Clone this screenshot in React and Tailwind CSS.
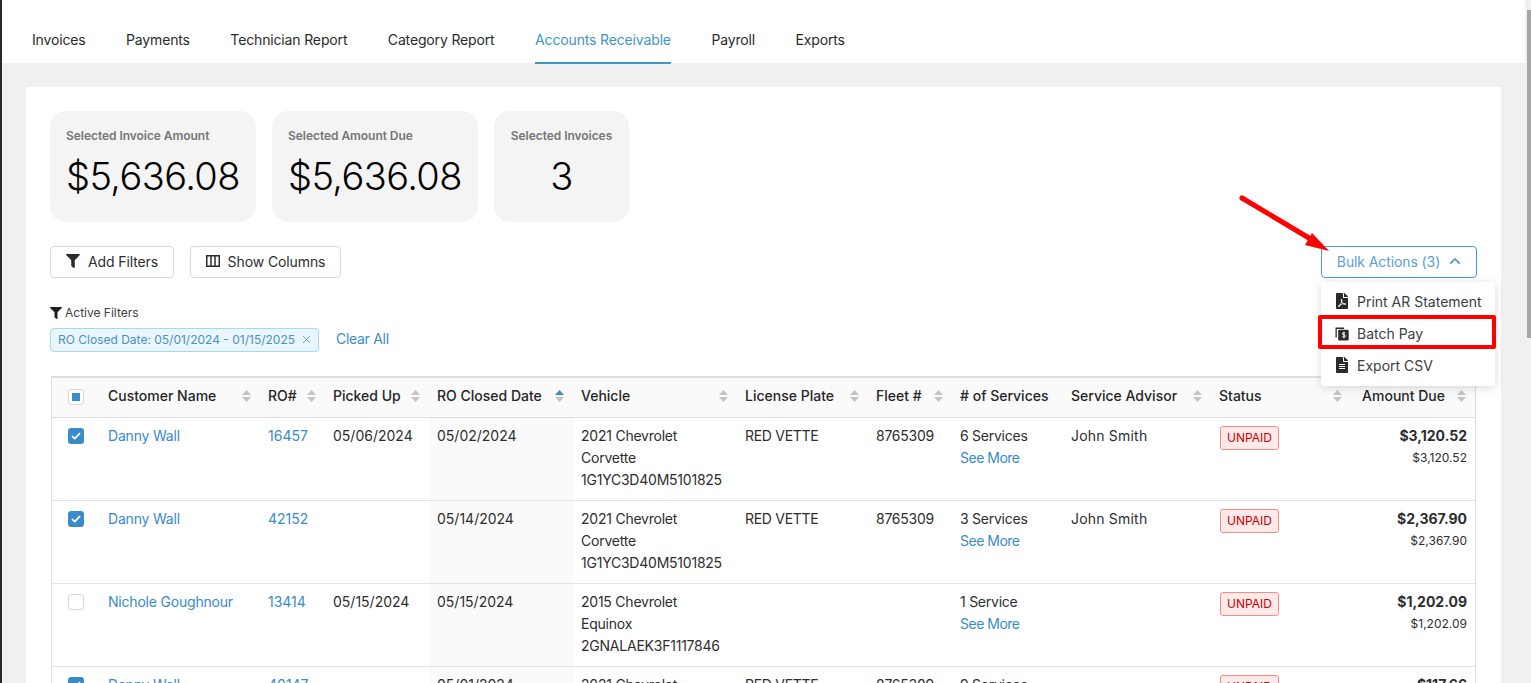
import React from 'react';
import { FaFilter, FaFilePdf, FaFileAlt, FaChevronUp } from 'react-icons/fa';
import { X } from 'lucide-react';

const tabs = ['Invoices', 'Payments', 'Technician Report', 'Category Report', 'Accounts Receivable', 'Payroll', 'Exports'];

const columns = [
  { label: 'Customer Name', sort: true },
  { label: 'RO#', sort: true },
  { label: 'Picked Up', sort: true },
  { label: 'RO Closed Date', sort: true, active: true },
  { label: 'Vehicle', sort: true },
  { label: 'License Plate', sort: true },
  { label: 'Fleet #', sort: true },
  { label: '# of Services', sort: false },
  { label: 'Service Advisor', sort: true },
  { label: 'Status', sort: true },
  { label: 'Amount Due', sort: true, right: true },
];

const rows = [
  { checked: true, name: 'Danny Wall', ro: '16457', picked: '05/06/2024', closed: '05/02/2024', vehicle: ['2021 Chevrolet', 'Corvette', '1G1YC3D40M5101825'], plate: 'RED VETTE', fleet: '8765309', services: '6 Services', advisor: 'John Smith', amount: '$3,120.52' },
  { checked: true, name: 'Danny Wall', ro: '42152', picked: '', closed: '05/14/2024', vehicle: ['2021 Chevrolet', 'Corvette', '1G1YC3D40M5101825'], plate: 'RED VETTE', fleet: '8765309', services: '3 Services', advisor: 'John Smith', amount: '$2,367.90' },
  { checked: false, name: 'Nichole Goughnour', ro: '13414', picked: '05/15/2024', closed: '05/15/2024', vehicle: ['2015 Chevrolet', 'Equinox', '2GNALAEK3F1117846'], plate: '', fleet: '', services: '1 Service', advisor: '', amount: '$1,202.09' },
  { checked: true, name: 'Danny Wall', ro: '40147', picked: '', closed: '05/01/2024', vehicle: ['2021 Chevrolet', 'Corvette', '1G1YC3D40M5101825'], plate: 'RED VETTE', fleet: '8765309', services: '9 Services', advisor: '', amount: '$117.66' },
];

function SortIcon({ active }) {
  return (
    <svg width="9" height="12" viewBox="0 0 9 12" className="shrink-0">
      <path d="M4.5 0 L9 5 L0 5 Z" fill={active ? '#3a8bc9' : '#c4c4c4'} />
      <path d="M0 7 L9 7 L4.5 12 Z" fill="#c4c4c4" />
    </svg>
  );
}

function Checkbox({ checked }) {
  if (!checked) {
    return <div className="w-4 h-4 rounded-[3px] border border-[#d9d9d9] bg-white" />;
  }
  return (
    <div className="w-4 h-4 rounded-[3px] bg-[#3a8bc9] flex items-center justify-center">
      <svg width="10" height="8" viewBox="0 0 10 8" fill="none">
        <path d="M1 4 L3.8 6.6 L9 1.2" stroke="white" strokeWidth="1.8" />
      </svg>
    </div>
  );
}

function StatCard({ label, value, center }) {
  return (
    <div className={`h-[111px] rounded-2xl bg-[#f4f4f4] px-4 pt-[16px] ${center ? 'text-center' : ''}`}>
      <div className="text-[12px] leading-[18px] font-semibold text-[#767676] tracking-[-0.05px] whitespace-nowrap">{label}</div>
      <div className="mt-[6px] text-[38px] leading-[50px] font-light text-black tracking-[-0.6px]">{value}</div>
    </div>
  );
}

function BatchPayIcon() {
  return (
    <svg width="15" height="15" viewBox="0 0 14 14">
      <path d="M0.5 1 H9 V2.4 H1.8 V11 H0.5 Z" fill="#2b2b2b" />
      <rect x="3.2" y="3.2" width="10.5" height="10.8" rx="1.2" fill="#2b2b2b" />
      <path d="M10.2 6.6 C9.6 5.9 7.4 5.9 7.4 7.2 C7.4 8.6 10.4 8 10.4 9.6 C10.4 10.9 8.2 10.9 7.4 10.1 M8.9 5.2 V11.8" fill="none" stroke="white" strokeWidth="1" />
    </svg>
  );
}

function MenuItem({ icon, label }) {
  return (
    <div className="h-8 pl-[14px] pb-[2px] flex items-center gap-[8px] text-[14px] text-[#3d3d3d] whitespace-nowrap">
      <span className="w-[14px] flex justify-center text-[#2b2b2b]">{icon}</span>
      {label}
    </div>
  );
}

const cell = 'border-b border-[#e3e3e3] px-2 pt-[7px] pb-2';

export default function App() {
  return (
    <div className="relative flex h-[683px] w-[1531px] overflow-hidden bg-[#f0f0f0] text-[#2e2e2e] font-['Inter','Liberation_Sans',sans-serif]">
      <div className="w-[2px] shrink-0 bg-[#1f2a33]" />

      <div className="flex-1 min-w-0">
        <nav className="h-[63px] pl-[30px] flex items-end gap-[40.5px] bg-white">
          {tabs.map((t) => (
            <div
              key={t}
              className={`h-[49px] -mb-px pt-[16px] text-[14px] leading-[18px] tracking-[-0.15px] whitespace-nowrap ${t === 'Accounts Receivable' ? 'text-[#4096c4] border-b-2 border-[#4096c4]' : 'text-[#2b2b2b]'}`}
            >
              {t}
            </div>
          ))}
        </nav>

        <main className="ml-[24px] mr-[24px] mt-[24px] bg-white p-6 h-[700px]">
          <div className="flex gap-4">
            <div className="w-[206px]"><StatCard label="Selected Invoice Amount" value="$5,636.08" /></div>
            <div className="w-[206px]"><StatCard label="Selected Amount Due" value="$5,636.08" /></div>
            <div className="w-[135px]"><StatCard label="Selected Invoices" value="3" center /></div>
          </div>

          <div className="mt-6 flex items-start justify-between">
            <div className="flex gap-4">
              <button className="h-8 w-[124px] pb-[2px] rounded-[4px] border border-[#d9d9d9] bg-white flex items-center justify-center gap-2 text-[14px] tracking-[-0.1px]">
                <FaFilter size={14} className="text-[#2b2b2b]" /> Add Filters
              </button>
              <button className="h-8 w-[151px] pb-[2px] rounded-[4px] border border-[#d9d9d9] bg-white flex items-center justify-center gap-2 text-[14px] tracking-[-0.1px]">
                <svg width="14" height="12" viewBox="0 0 14 12" fill="none" stroke="#2b2b2b">
                  <rect x="0.75" y="0.75" width="12.5" height="10.5" strokeWidth="1.5" />
                  <path d="M5 1 V11 M9 1 V11" strokeWidth="1.5" />
                </svg>
                Show Columns
              </button>
            </div>

            <div className="relative">
              <button className="h-8 w-[156px] pb-[2px] rounded-[4px] border border-[#4a9ad0] bg-white flex items-center justify-center gap-2 text-[14px] tracking-[-0.1px] text-[#5b9fd6]">
                Bulk Actions (3) <FaChevronUp size={12} className="ml-[1px]" />
              </button>
              <div className="absolute z-20 left-0 top-[36px] w-[174px] py-[4px] rounded-[4px] bg-white shadow-[0_2px_10px_rgba(0,0,0,0.15)]">
                <MenuItem icon={<FaFilePdf size={16} />} label="Print AR Statement" />
                <MenuItem icon={<BatchPayIcon />} label="Batch Pay" />
                <MenuItem icon={<FaFileAlt size={16} />} label="Export CSV" />
                <div className="absolute left-[-3px] top-[33px] w-[178px] h-[34px] border-[4px] border-[#ff0000] rounded-[2px]" />
              </div>
            </div>
          </div>

          <div className="mt-[27px] flex items-center gap-[3px] text-[12px] leading-[16px] text-[#3d3d3d]">
            <FaFilter size={12} className="text-[#1f1f1f]" /> Active Filters
          </div>
          <div className="mt-[7px] flex items-center gap-[17px]">
            <div className="h-6 w-[269px] pb-px rounded-[4px] border border-[#a6d8ee] bg-[#e9f7fd] pl-[7px] flex items-center gap-[5px] text-[12px] text-[#4a90c2] whitespace-nowrap">
              RO Closed Date: 05/01/2024 - 01/15/2025 <X size={13} strokeWidth={1.5} />
            </div>
            <div className="text-[14px] pb-[3px] tracking-[-0.3px] text-[#3a8bc9]">Clear All</div>
          </div>

          <div className="mt-[24px] mx-px border-t-2 border-l border-r border-[#dedede]">
            <table className="w-[1423px] table-fixed border-separate border-spacing-0 text-[14px] leading-[22px]">
              <colgroup>
                {[48, 160, 65, 104, 144, 164, 131, 84, 111, 148, 140, 124].map((w, i) => (
                  <col key={i} width={w} />
                ))}
              </colgroup>
              <thead>
                <tr className="h-[40px] bg-[#fafafa]">
                  <th className="border-b border-[#dedede] pl-4 pb-[2px] font-normal">
                    <div className="w-4 h-4 rounded-[3px] border border-[#d9d9d9] bg-white flex items-center justify-center">
                      <div className="w-2 h-2 bg-[#3a8bc9]" />
                    </div>
                  </th>
                  {columns.map((c) => (
                    <th key={c.label} className="border-b border-[#dedede] pl-2 pr-[9px] pb-[3px] font-medium text-[#262626] text-left">
                      <div className={`flex items-center whitespace-nowrap ${c.right ? 'justify-end gap-3' : 'justify-between'}`}>
                        {c.label}
                        {c.sort && <SortIcon active={c.active} />}
                      </div>
                    </th>
                  ))}
                </tr>
              </thead>
              <tbody>
                {rows.map((r, i) => (
                  <tr key={i} className="align-top">
                    <td className="h-[83px] border-b border-[#e3e3e3] pl-4 pt-[10px]"><Checkbox checked={r.checked} /></td>
                    <td className={`${cell} text-[#3a8bc9] whitespace-nowrap tracking-[-0.2px]`}>{r.name}</td>
                    <td className={`${cell} text-[#3a8bc9]`}>{r.ro}</td>
                    <td className={`${cell} whitespace-nowrap`}>{r.picked}</td>
                    <td className={`${cell} bg-[#fafafa]`}>{r.closed}</td>
                    <td className={`${cell} whitespace-nowrap tracking-[-0.23px]`}>
                      {r.vehicle.map((v) => <div key={v}>{v}</div>)}
                    </td>
                    <td className={`${cell} tracking-[-0.3px]`}>{r.plate}</td>
                    <td className={`${cell} tracking-[-0.25px]`}>{r.fleet}</td>
                    <td className={`${cell} tracking-[-0.25px]`}>
                      <div>{r.services}</div>
                      <div className="text-[#3a8bc9] tracking-[-0.5px]">See More</div>
                    </td>
                    <td className={`${cell} tracking-[0.2px]`}>{r.advisor}</td>
                    <td className="border-b border-[#e3e3e3] pl-[9px] pt-2">
                      <span className="inline-flex items-center justify-center w-[59px] h-6 rounded-[3px] border border-[#ff8a80] bg-[#ffeaea] text-[12px] text-[#cc0000]">UNPAID</span>
                    </td>
                    <td className={`${cell} text-right`}>
                      <div className="font-bold">{r.amount}</div>
                      <div className="text-[12px]">{r.amount}</div>
                    </td>
                  </tr>
                ))}
              </tbody>
            </table>
          </div>
        </main>
      </div>

      <div className="w-[6px] shrink-0">
        <div className="ml-[2px] mt-[10px] w-[4px] h-[328px] bg-[#a6a6a6]" />
      </div>

      {/* annotation arrow */}
      <svg className="absolute left-[1230px] top-[185px] z-30" width="110" height="75" viewBox="0 0 110 75">
        <path d="M12 13 L84 56" stroke="#ff0000" strokeWidth="5" strokeLinecap="round" />
        <path d="M99 66 L82 48 L75 60 Z" fill="#ff0000" />
      </svg>
    </div>
  );
}
